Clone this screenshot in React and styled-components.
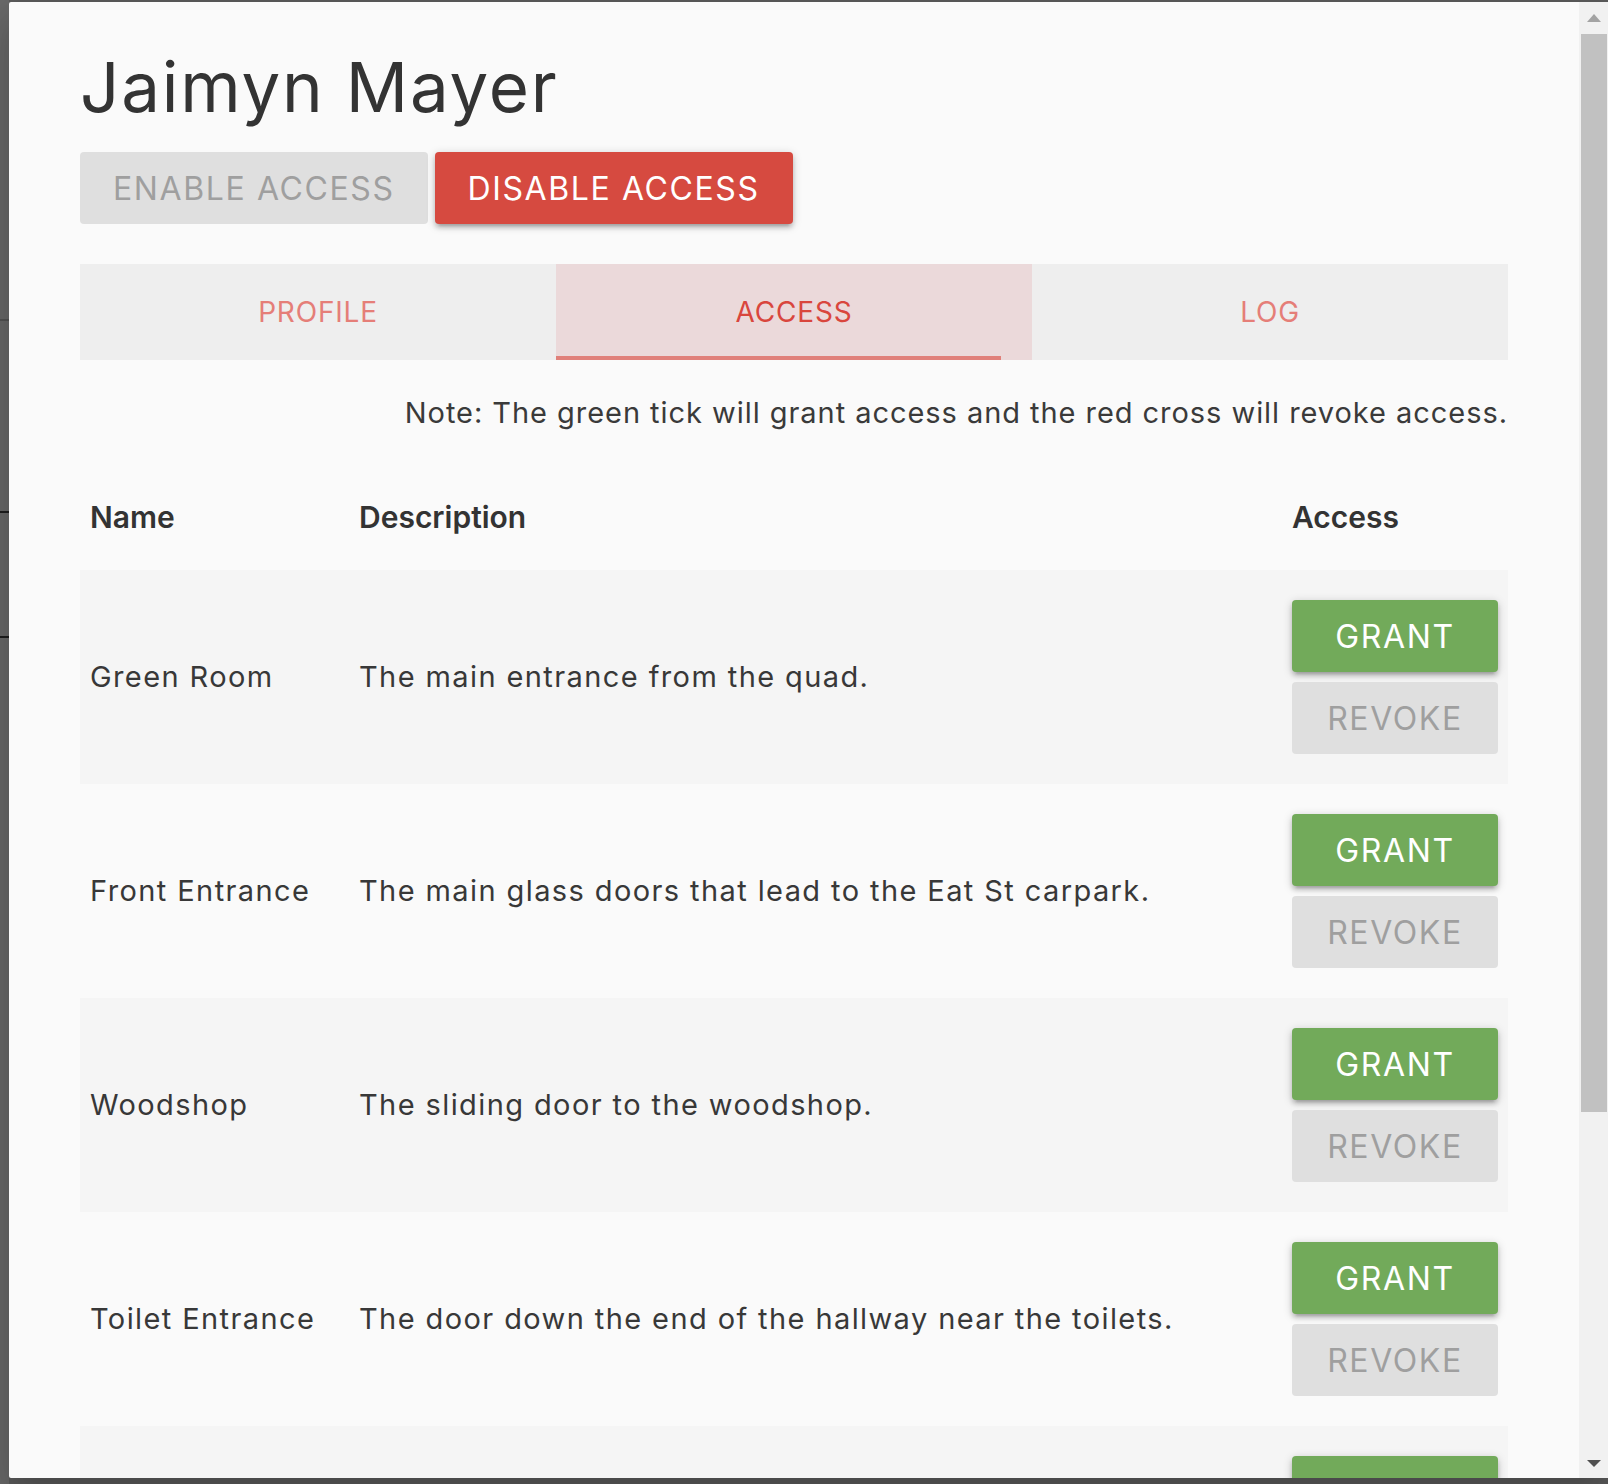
import React from "react";
import styled, { createGlobalStyle } from "styled-components";

const GlobalStyle = createGlobalStyle`
  html, body {
    margin: 0;
    padding: 0;
    background: #5e5e5e;
    font-family: "Inter", "Noto Sans", "Liberation Sans", sans-serif;
    color: #333;
  }
  * { box-sizing: border-box; }
`;

const Screen = styled.div`
  display: flex;
  width: 1608px;
  height: 1484px;
  overflow: hidden;
  background: #5e5e5e;
`;

const BackPage = styled.div`
  width: 9px;
  flex-shrink: 0;
  background: #6b6b6b;
`;

const BackLine = styled.div`
  height: ${p => p.$h || 2}px;
  margin-top: ${p => p.$top}px;
  background: ${p => p.$color || "#1e1e1e"};
`;

const Modal = styled.div`
  flex: 1;
  display: flex;
  margin-top: 2px;
  height: 1476px;
  background: #fafafa;
  border-radius: 2px 0 0 2px;
  box-shadow: 0 24px 38px 3px rgba(0,0,0,.14), 0 9px 46px 8px rgba(0,0,0,.12);
  overflow: hidden;
`;

const Content = styled.div`
  flex: 1;
  padding: 45px 71px 0;
  overflow: hidden;
`;

const Title = styled.h1`
  margin: 0;
  font-size: 69px;
  line-height: 80px;
  font-weight: 400;
  letter-spacing: 1.8px;
  color: #333;
`;

const ButtonRow = styled.div`
  display: flex;
  gap: 7px;
  margin-top: 25px;
`;

const Button = styled.button`
  height: 72px;
  padding: 0 33px;
  border: none;
  border-radius: 4px;
  font-family: inherit;
  font-size: 32px;
  letter-spacing: 1.6px;
  text-transform: uppercase;
  cursor: pointer;
  color: ${p => (p.$kind === "off" ? "#9f9f9f" : "#fff")};
  background: ${p =>
    p.$kind === "danger" ? "#d64a40" : p.$kind === "success" ? "#72aa5a" : "#dfdfdf"};
  box-shadow: ${p =>
    p.$kind === "off"
      ? "none"
      : "0 4px 4px 0 rgba(0,0,0,.14), 0 6px 2px -4px rgba(0,0,0,.12), 0 2px 10px 0 rgba(0,0,0,.2)"};
`;

const Tabs = styled.div`
  display: flex;
  margin-top: 40px;
  height: 96px;
  background: #eeeeee;
`;

const Tab = styled.div`
  flex: 1;
  position: relative;
  display: flex;
  align-items: center;
  justify-content: center;
  font-size: 28px;
  letter-spacing: 0.8px;
  text-transform: uppercase;
  color: ${p => (p.$active ? "#d9463d" : "#e57e78")};
  background: ${p => (p.$active ? "#ebd9da" : "transparent")};
`;

const Indicator = styled.span`
  position: absolute;
  left: 0;
  right: 31px;
  bottom: 0;
  height: 4px;
  background: #e0807a;
`;

const Note = styled.p`
  margin: 33px 0 0;
  text-align: right;
  font-size: 29px;
  line-height: 40px;
  letter-spacing: 0.95px;
  color: #3a3a3a;
`;

const Table = styled.table`
  width: 100%;
  margin-top: 37px;
  border-collapse: collapse;
  table-layout: fixed;
`;

const Th = styled.th`
  width: ${p => p.$w}px;
  padding: 27px 10px 33px;
  text-align: left;
  font-size: 30px;
  line-height: 40px;
  font-weight: 600;
  color: #333;
`;

const Row = styled.tr`
  &:nth-child(odd) {
    background: #f5f5f5;
  }
`;

const Td = styled.td`
  padding: 30px 10px;
  font-size: 29px;
  line-height: 40px;
  letter-spacing: 1.4px;
  color: #383838;
  vertical-align: middle;
`;

const ActionStack = styled.div`
  display: flex;
  flex-direction: column;
  gap: 10px;
`;

const ScrollTrack = styled.div`
  width: 29px;
  flex-shrink: 0;
  display: flex;
  flex-direction: column;
  background: #f1f1f1;
`;

const Arrow = styled.div`
  height: ${p => p.$h}px;
  display: flex;
  align-items: center;
  justify-content: center;
  &::after {
    content: "";
    border-left: 7px solid transparent;
    border-right: 7px solid transparent;
    ${p =>
      p.$down
        ? "border-top: 7px solid #505050;"
        : "border-bottom: 8px solid #a3a3a3;"}
  }
`;

const Thumb = styled.div`
  height: 1078px;
  margin: 0 1px 0 2px;
  background: #c1c1c1;
`;

const Spacer = styled.div`
  flex: 1;
`;

const doors = [
  { name: "Green Room", desc: "The main entrance from the quad." },
  { name: "Front Entrance", desc: "The main glass doors that lead to the Eat St carpark." },
  { name: "Woodshop", desc: "The sliding door to the woodshop." },
  { name: "Toilet Entrance", desc: "The door down the end of the hallway near the toilets." },
  { name: "Laser Room", desc: "The door into the laser cutter room." },
];

export default function App() {
  return (
    <>
      <GlobalStyle />
      <Screen>
        <BackPage>
          <BackLine $top={319} $h={2} $color="#555" />
          <BackLine $top={190} />
          <BackLine $top={123} />
        </BackPage>
        <Modal>
          <Content>
            <Title>Jaimyn Mayer</Title>
            <ButtonRow>
              <Button $kind="off">Enable Access</Button>
              <Button $kind="danger">Disable Access</Button>
            </ButtonRow>
            <Tabs>
              <Tab>Profile</Tab>
              <Tab $active>
                Access
                <Indicator />
              </Tab>
              <Tab>Log</Tab>
            </Tabs>
            <Note>Note: The green tick will grant access and the red cross will revoke access.</Note>
            <Table>
              <thead>
                <tr>
                  <Th $w={269}>Name</Th>
                  <Th $w={933}>Description</Th>
                  <Th $w={226}>Access</Th>
                </tr>
              </thead>
              <tbody>
                {doors.map(d => (
                  <Row key={d.name}>
                    <Td>{d.name}</Td>
                    <Td>{d.desc}</Td>
                    <Td>
                      <ActionStack>
                        <Button $kind="success">Grant</Button>
                        <Button $kind="off">Revoke</Button>
                      </ActionStack>
                    </Td>
                  </Row>
                ))}
              </tbody>
            </Table>
          </Content>
          <ScrollTrack>
            <Arrow $h={32} />
            <Thumb />
            <Spacer />
            <Arrow $h={30} $down />
          </ScrollTrack>
        </Modal>
      </Screen>
    </>
  );
}
